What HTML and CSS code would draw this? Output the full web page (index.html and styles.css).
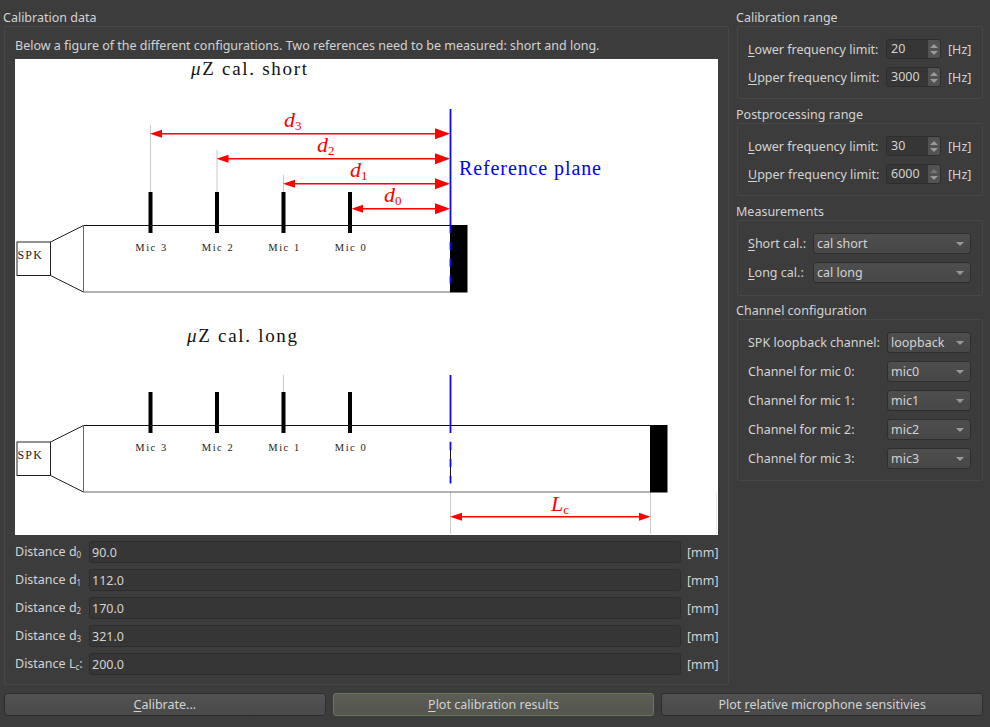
FILE: index.html
```html
<!DOCTYPE html>
<html lang="en">
<head>
<meta charset="utf-8">
<title>Calibration</title>
<link rel="stylesheet" href="styles.css">
</head>
<body>
<div class="window">
  <div class="main">
    <section class="left">
      <div class="title">Calibration data</div>
      <div class="frame left-frame">
        <div class="intro">Below a figure of the different configurations. Two references need to be measured: short and long.</div>
        <svg class="figure" viewBox="15 59 703 476" width="703" height="476">
          <defs>
            <g id="mics">
              <rect x="148.500" y="0" width="4" height="41"/>
              <rect x="215" y="0" width="4" height="41"/>
              <rect x="281.500" y="0" width="4" height="41"/>
              <rect x="348" y="0" width="4" height="41"/>
            </g>
            <g id="miclabels" class="t-mic">
              <text x="151.500" text-anchor="middle">Mic 3</text>
              <text x="218" text-anchor="middle">Mic 2</text>
              <text x="284.500" text-anchor="middle">Mic 1</text>
              <text x="351" text-anchor="middle">Mic 0</text>
            </g>
            <g id="spk">
              <rect x="17" y="0" width="33.500" height="33.500" class="ln"/>
              <path class="ln" d="M50.500 0 83.500 -16.500M50.500 33.500 83.500 50"/>
              <text x="17.500" y="17.300" class="t-spk">SPK</text>
            </g>
          </defs>

          <text x="191" y="75" class="t-title"><tspan class="it">μ</tspan>Z cal. short</text>
          <path class="guide" d="M150.500 125V192M217 150V192M283.500 175V192"/>
          <use href="#mics" y="192"/>
          <use href="#spk" y="242"/>
          <use href="#miclabels" y="251"/>
          <path class="tube-top" d="M83.500 225.500H450"/>
          <path class="tube-bot" d="M83.500 225.500V292H450"/>
          <rect x="450" y="225" width="17.500" height="67.500"/>
          <g class="arrow">
            <path d="M155 133.700H440M222 158.700H440M288 183.700H440M355 208.700H440"/>
            <path class="head" d="M450 133.700 435 128.200V139.200ZM450 158.700 435 153.200V164.200ZM450 183.700 435 178.200V189.200ZM450 208.700 435 203.200V214.200Z"/>
            <path class="head" d="M150 133.700 162 129.700V137.700ZM216.500 158.700 228.500 154.700V162.700ZM283 183.700 295 179.700V187.700ZM351.500 208.700 363 204.700V212.700Z"/>
          </g>
          <path class="blue" d="M450.500 109V233M450.500 241.700V250M450.500 258.500V267M450.500 275.500V283.500"/>
          <text x="284" y="127" class="t-d">d<tspan class="t-sub" dy="3">3</tspan></text>
          <text x="317" y="152" class="t-d">d<tspan class="t-sub" dy="3">2</tspan></text>
          <text x="350" y="177" class="t-d">d<tspan class="t-sub" dy="3">1</tspan></text>
          <text x="384" y="202" class="t-d">d<tspan class="t-sub" dy="3">0</tspan></text>
          <text x="459" y="175" class="t-ref">Reference plane</text>

          <text x="187" y="342" class="t-title"><tspan class="it">μ</tspan>Z cal. long</text>
          <path class="guide" d="M283.500 375V392M450.500 492V534M650.500 492V534"/>
          <path class="guide faint" d="M716.500 492V534"/>
          <use href="#mics" y="392"/>
          <use href="#spk" y="442"/>
          <use href="#miclabels" y="451"/>
          <path class="tube-top" d="M83.500 425.500H650"/>
          <path class="tube-bot" d="M83.500 425.500V492H650"/>
          <rect x="650" y="425" width="17.500" height="67.500"/>
          <path class="tube-top" d="M450.500 450V476"/>
          <path class="blue" d="M450.500 375V433M450.500 441.700V450M450.500 459V467M450.500 475.700V483.500"/>
          <g class="arrow">
            <path d="M455 516.700H645"/>
            <path class="head" d="M450 516.700 462 512.700V520.700ZM650.500 516.700 639 512.700V520.700Z"/>
          </g>
          <text x="551" y="511" class="t-d">L<tspan class="t-sub" dy="3">c</tspan></text>
        </svg>
        <div class="dist-grid">
          <div class="row"><span class="dlabel">Distance d<sub>0</sub></span><div class="field">90.0</div><span class="unit">[mm]</span></div>
          <div class="row"><span class="dlabel">Distance d<sub>1</sub></span><div class="field">112.0</div><span class="unit">[mm]</span></div>
          <div class="row"><span class="dlabel">Distance d<sub>2</sub></span><div class="field">170.0</div><span class="unit">[mm]</span></div>
          <div class="row"><span class="dlabel">Distance d<sub>3</sub></span><div class="field">321.0</div><span class="unit">[mm]</span></div>
          <div class="row"><span class="dlabel">Distance L<sub>c</sub>:</span><div class="field">200.0</div><span class="unit">[mm]</span></div>
        </div>
      </div>
    </section>

    <aside class="right">
      <div class="title">Calibration range</div>
      <div class="frame range">
        <div class="hrow"><span class="rlabel"><u>L</u>ower frequency limit:</span><div class="spin"><span class="val">20</span><span class="spinbtn"><i class="up"></i><i class="down"></i></span></div><span class="hz">[Hz]</span></div>
        <div class="hrow"><span class="rlabel"><u>U</u>pper frequency limit:</span><div class="spin"><span class="val">3000</span><span class="spinbtn"><i class="up"></i><i class="down"></i></span></div><span class="hz">[Hz]</span></div>
      </div>
      <div class="title next">Postprocessing range</div>
      <div class="frame range">
        <div class="hrow"><span class="rlabel"><u>L</u>ower frequency limit:</span><div class="spin"><span class="val">30</span><span class="spinbtn"><i class="up"></i><i class="down"></i></span></div><span class="hz">[Hz]</span></div>
        <div class="hrow"><span class="rlabel"><u>U</u>pper frequency limit:</span><div class="spin"><span class="val">6000</span><span class="spinbtn"><i class="up dim"></i><i class="down"></i></span></div><span class="hz">[Hz]</span></div>
      </div>
      <div class="title next">Measurements</div>
      <div class="frame combos measure">
        <div class="hrow"><span class="mlabel"><u>S</u>hort cal.:</span><div class="combo wide">cal short<i class="down"></i></div></div>
        <div class="hrow"><span class="mlabel"><u>L</u>ong cal.:</span><div class="combo wide">cal long<i class="down"></i></div></div>
      </div>
      <div class="title next tight">Channel configuration</div>
      <div class="frame combos channels">
        <div class="hrow"><span class="clabel">SPK loopback channel:</span><div class="combo">loopback<i class="down"></i></div></div>
        <div class="hrow"><span class="clabel">Channel for mic 0:</span><div class="combo">mic0<i class="down"></i></div></div>
        <div class="hrow"><span class="clabel">Channel for mic 1:</span><div class="combo">mic1<i class="down"></i></div></div>
        <div class="hrow"><span class="clabel">Channel for mic 2:</span><div class="combo">mic2<i class="down"></i></div></div>
        <div class="hrow"><span class="clabel">Channel for mic 3:</span><div class="combo">mic3<i class="down"></i></div></div>
      </div>
    </aside>
  </div>

  <div class="buttons">
    <div class="btn"><u>C</u>alibrate...</div>
    <div class="btn focus"><u>P</u>lot calibration results</div>
    <div class="btn">Plot <u>r</u>elative microphone sensitivies</div>
  </div>
</div>
</body>
</html>
```
FILE: styles.css
```css
* { box-sizing: border-box; }
html, body { margin: 0; padding: 0; }
body {
  background: #3c3c3c;
  color: #d3d3d3;
  font: 12.500px/17px "Noto Sans", sans-serif;
  width: 990px;
  height: 727px;
  overflow: hidden;
}
u { text-underline-offset: 2px; text-decoration-thickness: 1px; }
.window { display: flex; flex-direction: column; height: 727px; }
.main { display: flex; gap: 8px; padding: 9px 7px 0 4px; height: 685px; }
.left { width: 725px; display: flex; flex-direction: column; }
.right { width: 246px; display: flex; flex-direction: column; }
.title { height: 17px; margin-left: -1px; flex: none; white-space: nowrap; }
.title.next { margin-top: 7px; }
.title.next.tight { margin-top: 6px; }
.frame {
  border: 1px solid #474747;
  border-radius: 2px;
}
.left-frame {
  flex: 1;
  padding: 10px 10px 0 10px;
  display: flex;
  flex-direction: column;
}
.intro { height: 22px; line-height: 17px; flex: none; white-space: nowrap; }
.figure { display: block; background: #fff; flex: none; }
.figure rect { fill: #000; }
.figure rect.ln { fill: none; }
.figure .ln { stroke: #222; stroke-width: 1; fill: none; }
.figure text { font-family: "Liberation Serif", serif; }
.tube-top { stroke: #111; stroke-width: 1; fill: none; }
.tube-bot { stroke: #666; stroke-width: 1; fill: none; }
.guide { stroke: #c8c8c8; stroke-width: 1; fill: none; }
.guide.faint { stroke: #e8e8e8; }
.arrow path { stroke: #f00; stroke-width: 1.500; fill: none; }
.arrow path.head { fill: #f00; stroke: none; }
.blue { stroke: #0a0af0; stroke-width: 1.800; fill: none; }
.t-title { font-size: 19px; fill: #111; letter-spacing: 1.700px; }
.it { font-style: italic; }
.t-mic text { font-size: 10.500px; letter-spacing: 1.500px; fill: #222; }
.t-spk { font-size: 12px; fill: #222; letter-spacing: 1.200px; }
.t-d { font-size: 22px; font-style: italic; fill: #f00; }
.t-sub { font-size: 13px; }
.t-d .t-sub { font-style: normal; }
.t-ref { font-size: 20px; fill: #00f; letter-spacing: 0.900px; }

.dist-grid { display: flex; flex-direction: column; gap: 6px; padding-top: 6px; }
.row { display: flex; align-items: center; height: 22px; }
.dlabel { width: 74px; flex: none; white-space: nowrap; margin-top: -2px; }
.dlabel sub { font-size: 8px; line-height: 0; vertical-align: -2px; }
.field {
  width: 592px;
  height: 22px;
  line-height: 21px;
  background: #363636;
  border: 1px solid #2d2d2d;
  border-radius: 3px;
  padding-left: 2px;
  flex: none;
}
.unit { margin-left: 6px; white-space: nowrap; }

.range { height: 73px; padding: 12px 11px 0 10px; display: flex; flex-direction: column; gap: 8px; flex: none; }
.combos { padding: 12px 11px 0 10px; display: flex; flex-direction: column; gap: 8px; flex: none; }
.measure { height: 76px; }
.channels { height: 162px; }
.hrow { display: flex; align-items: center; white-space: nowrap; }
.rlabel { width: 138px; flex: none; }
.mlabel { width: 65px; flex: none; }
.clabel { width: 139px; flex: none; }
.spin {
  width: 55px;
  height: 20px;
  display: flex;
  background: #363636;
  border: 1px solid #2d2d2d;
  border-radius: 3px;
  line-height: 18px;
  overflow: hidden;
  flex: none;
}
.val { width: 41px; padding-left: 4px; flex: none; }
.spinbtn {
  flex: 1;
  background: #525252;
  display: flex;
  flex-direction: column;
  align-items: center;
  justify-content: center;
  gap: 3px;
}
.up, .down { display: block; width: 0; height: 0; border-left: 4px solid transparent; border-right: 4px solid transparent; }
.up { border-bottom: 4px solid #9a9a9a; }
.up.dim { border-bottom-color: #777; }
.down { border-top: 4px solid #9a9a9a; }
.hz { margin-left: 7px; }
.combo {
  position: relative;
  height: 21px;
  width: 84px;
  line-height: 19px;
  padding-left: 3px;
  background: linear-gradient(#4e4e4e, #474747);
  border: 1px solid #2e2e2e;
  border-radius: 3px;
  flex: none;
}
.combo.wide { width: 158px; }
.combo .down { position: absolute; right: 6px; top: 8px; }

.buttons { display: flex; gap: 7px; padding: 8px 7px 0 4px; }
.btn {
  flex: 1;
  height: 23px;
  line-height: 21px;
  text-align: center;
  background: linear-gradient(#525252, #494949);
  border: 1px solid #2d2d2d;
  border-radius: 3px;
}
.btn.focus { background: linear-gradient(#5c5e56, #54564e); border-color: #677a55; }
```
